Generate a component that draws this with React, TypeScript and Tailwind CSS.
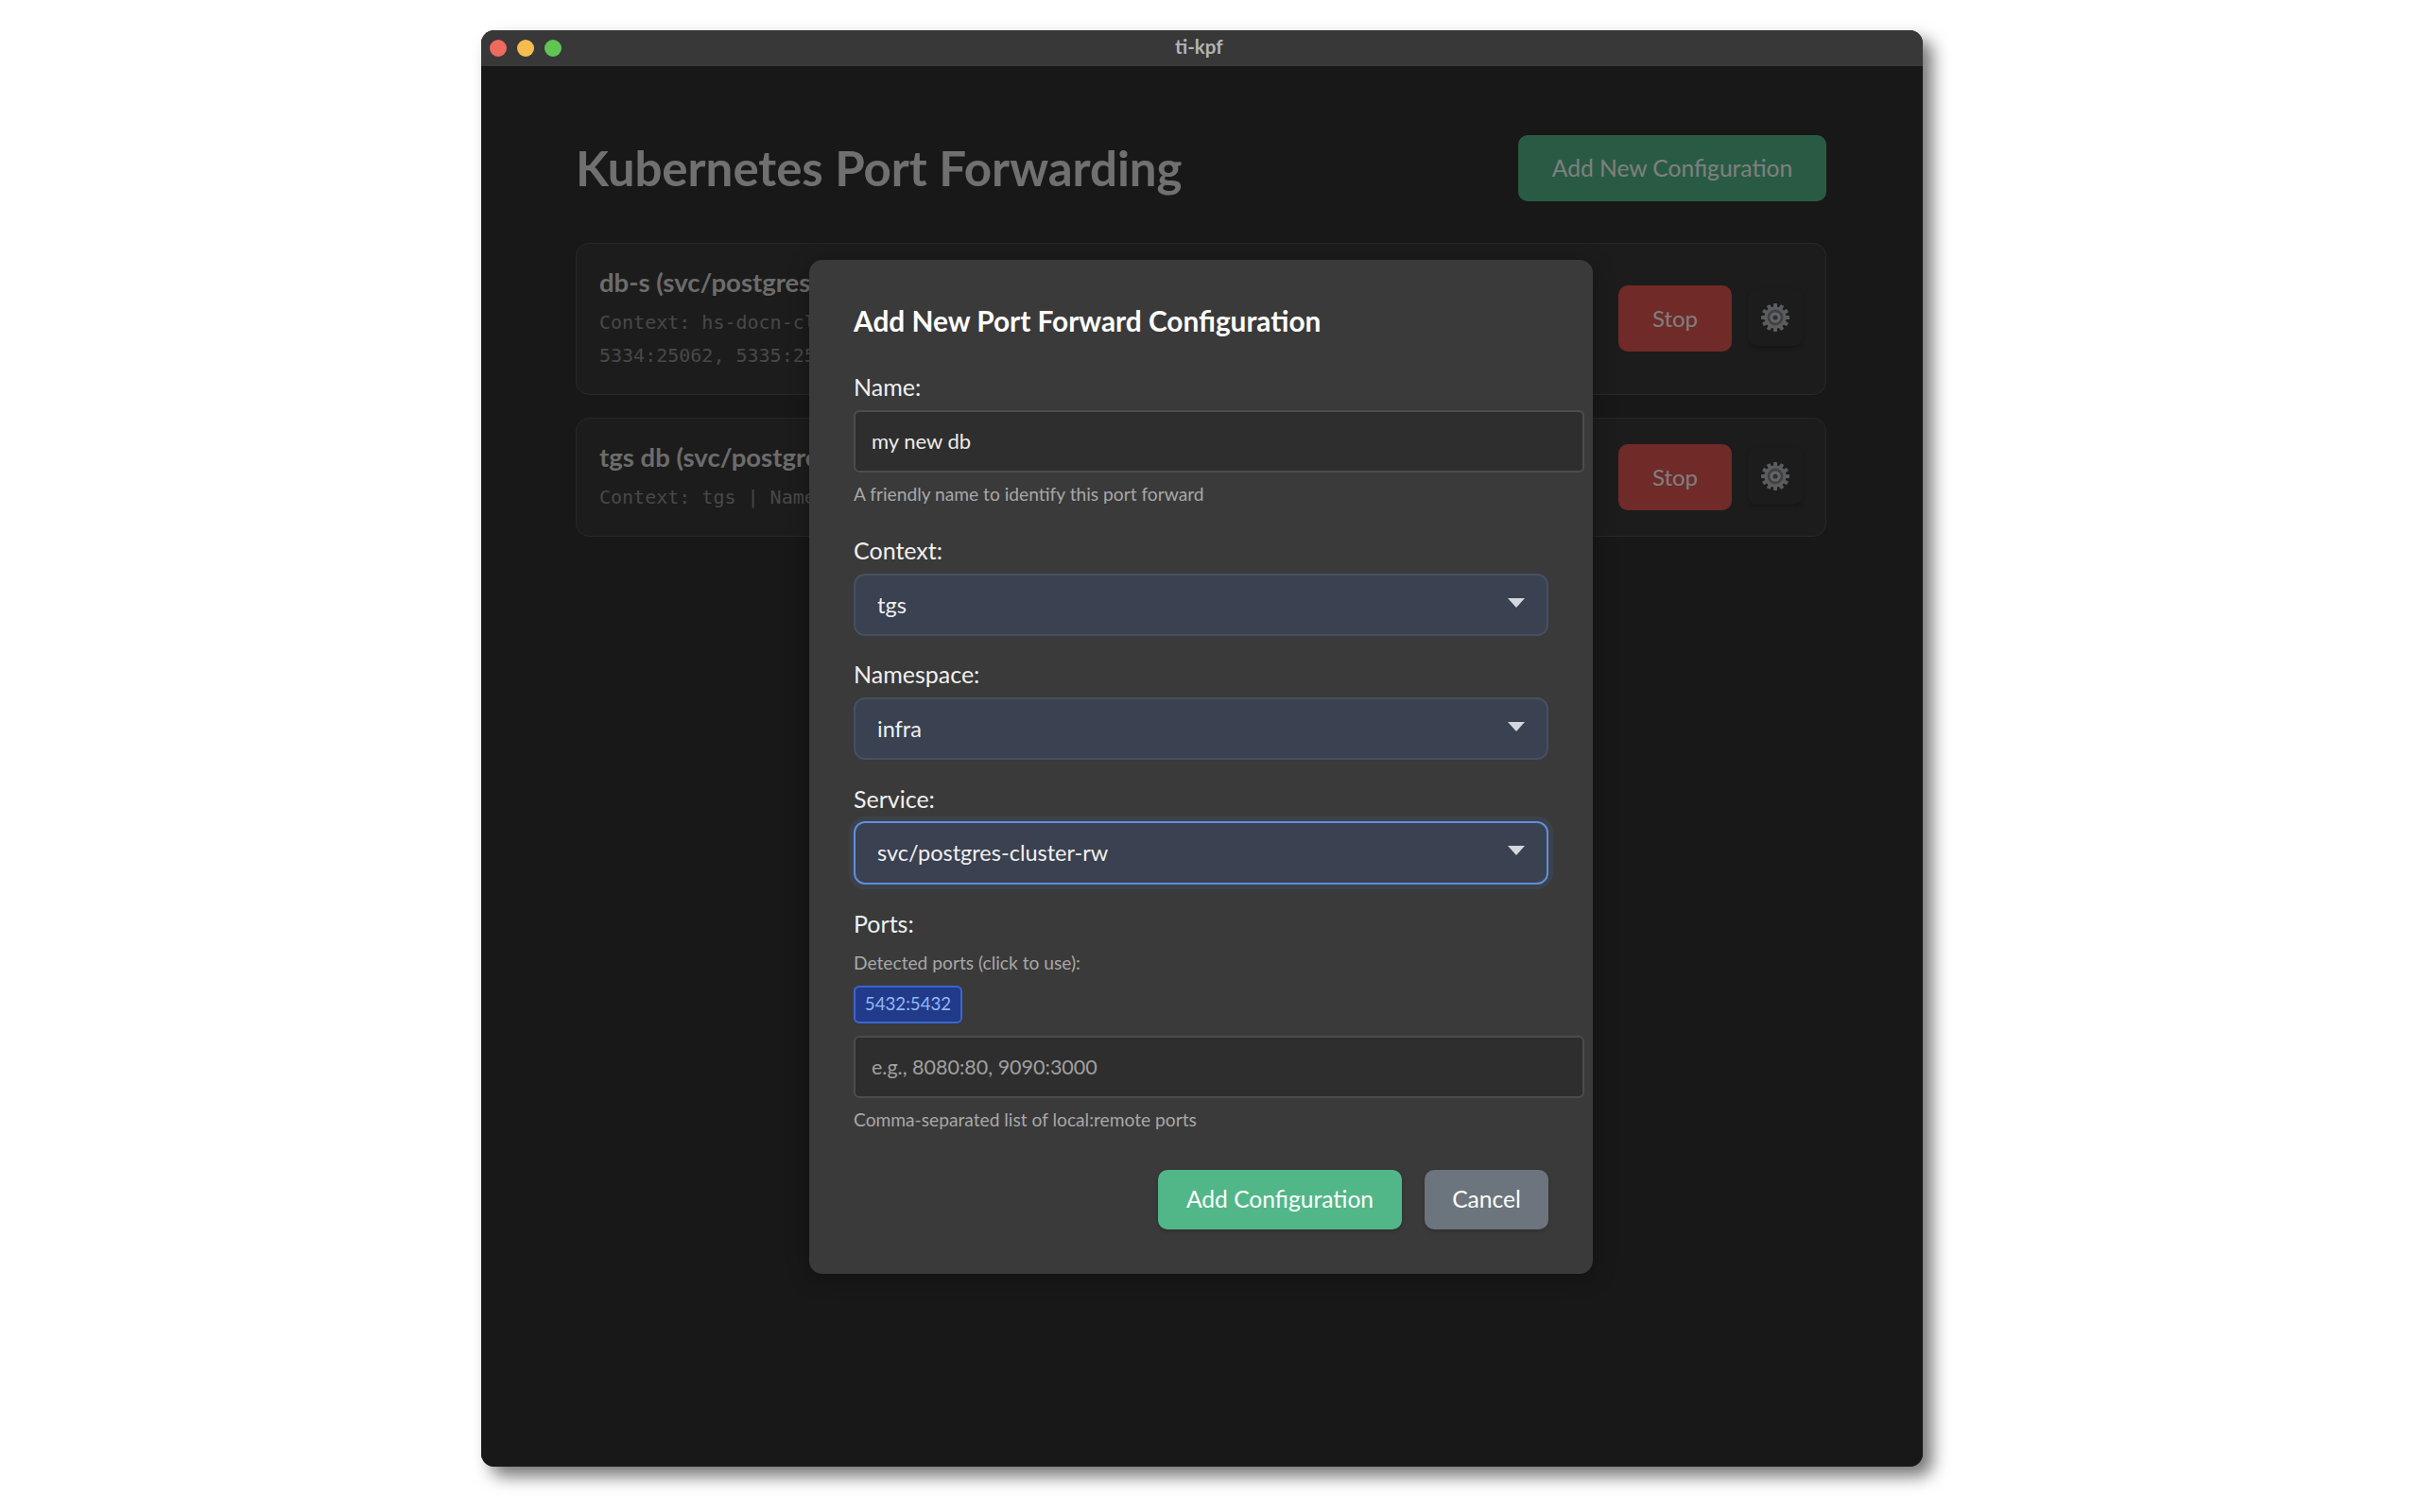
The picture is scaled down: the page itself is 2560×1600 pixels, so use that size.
const sans = "font-['Lato','Noto_Sans',sans-serif]";

function Gear() {
  const teeth = Array.from({ length: 12 }, (_, i) => i * 30);
  return (
    <svg width="32" height="32" viewBox="0 0 32 32" aria-hidden="true">
      {teeth.map((deg) => (
        <rect key={deg} x="14" y="1" width="4" height="6" rx="0.8" fill="#b4b8bd" transform={`rotate(${deg} 16 16)`} />
      ))}
      <circle cx="16" cy="16" r="11.6" fill="#b4b8bd" />
      <circle cx="16" cy="16" r="8.4" fill="#7e8288" />
      <circle cx="16" cy="16" r="5.6" fill="#c6cacf" />
      <circle cx="16" cy="16" r="2.6" fill="#5c5f64" />
    </svg>
  );
}

function ForwardCard({ title, lines }: { title: string; lines: string[] }) {
  return (
    <div className="flex items-center justify-between rounded-[14px] border border-[#505050] bg-[#383838] pb-[23px] pl-[24px] pr-[24px] pt-[25px]">
      <div className="min-w-0">
        <div className="text-[27.5px] font-bold leading-[32px] text-[#d8d8d8]">{title}</div>
        <div className="mt-[9px] font-['DejaVu_Sans_Mono',monospace] text-[20px] leading-[35px] text-[#909090]">
          {lines.map((line) => (
            <div key={line} className="whitespace-nowrap">{line}</div>
          ))}
        </div>
      </div>
      <div className="mb-[3px] flex shrink-0 items-center gap-[17px]">
        <button className="h-[70px] w-[120px] rounded-[10px] bg-[#e05450] text-[24px] text-[#ffffff]">Stop</button>
        <button className="mb-[2px] flex h-[60px] w-[58px] items-center justify-center rounded-[10px] shadow-[0_2px_4px_rgba(0,0,0,0.25)]">
          <Gear />
        </button>
      </div>
    </div>
  );
}

function Label({ children, className = "" }: { children: string; className?: string }) {
  return <label className={`block text-[25px] leading-[30px] text-[#f0f0f0] ${className}`}>{children}</label>;
}

function Help({ children }: { children: string }) {
  return <p className="mt-[11px] text-[19.2px] leading-[24px] text-[#a8a8a8]">{children}</p>;
}

function TextField({ value, placeholder, className = "" }: { value?: string; placeholder?: string; className?: string }) {
  return (
    <input
      readOnly
      value={value}
      placeholder={placeholder}
      className={`block h-[66px] w-[773px] rounded-[6px] border-2 border-[#4c4c4c] bg-[#2e2e2e] px-[17px] text-[22px] text-[#ececec] placeholder:text-[21.5px] placeholder:text-[#a0a0a0] ${className}`}
    />
  );
}

function SelectField({ value, focused = false, className = "" }: { value: string; focused?: boolean; className?: string }) {
  return (
    <div className={`relative w-[735px] ${className}`}>
      <select
        defaultValue={value}
        className={`block w-full appearance-none rounded-[12px] border-2 bg-[#3a4150] px-[23px] pt-[2px] text-[23.5px] text-[#f0f0f0] ${
          focused ? "h-[67px] border-[#5f8fdc] shadow-[0_0_0_5px_rgba(70,90,130,0.22)]" : "h-[66px] border-[#465062]"
        }`}
      >
        <option>{value}</option>
      </select>
      <svg className="absolute right-[25px] top-[26px]" width="18" height="10" viewBox="0 0 18 10" aria-hidden="true">
        <path d="M0 0h18L9 10z" fill="#d4d7dc" />
      </svg>
    </div>
  );
}

export default function App() {
  return (
    <div className={`min-h-screen bg-white pl-[509px] pt-[32px] ${sans}`}>
      <div className="relative flex h-[1520px] w-[1525px] flex-col overflow-visible rounded-[14px] bg-[#181818] shadow-[10px_10px_18px_rgba(0,0,0,0.55)]">
        {/* Title bar */}
        <div className="relative flex h-[38px] shrink-0 items-center gap-[11px] rounded-t-[14px] bg-[#383838] pl-[9px]">
          <span className="h-[18px] w-[18px] rounded-full bg-[#ee6a5f]" />
          <span className="h-[18px] w-[18px] rounded-full bg-[#f5bd4f]" />
          <span className="h-[18px] w-[18px] rounded-full bg-[#61c554]" />
          <span className="absolute left-[734px] -translate-y-[2px] text-[20.5px] font-bold text-[#b4b4b4]">ti-kpf</span>
        </div>

        {/* Page content, dimmed by the overlay */}
        <div className="relative min-h-0 flex-1 rounded-b-[14px] bg-[#303030]">
          <div className="pl-[100px] pr-[102px] pt-[73px]">
            <div className="flex items-center justify-between">
              <h1 className="text-[51px] font-bold leading-[70px] text-[#e0e0e0]">Kubernetes Port Forwarding</h1>
              <button className="h-[70px] w-[326px] rounded-[10px] bg-[#52b788] text-[24.6px] text-[#ffffff]">Add New Configuration</button>
            </div>
            <div className="mt-[44px] flex flex-col gap-[24px]">
              <ForwardCard
                title="db-s (svc/postgres-cluster-rw)"
                lines={["Context: hs-docn-cluster | Namespace: db", "5334:25062, 5335:25063"]}
              />
              <ForwardCard title="tgs db (svc/postgres-cluster-rw)" lines={["Context: tgs | Namespace: infra"]} />
            </div>
          </div>

          {/* Overlay and dialog */}
          <div className="absolute inset-0 flex items-center justify-center rounded-b-[14px] bg-black/50">
            <div className="mr-[2px] h-[1073px] w-[829px] rounded-[14px] bg-[#3a3a3a] px-[47px] pt-[47px] shadow-[0_4px_24px_rgba(0,0,0,0.3)]">
              <h2 className="text-[29.8px] font-bold leading-[36px] text-white">Add New Port Forward Configuration</h2>

              <Label className="mt-[36px]">Name:</Label>
              <TextField value="my new db" className="mt-[10px]" />
              <Help>A friendly name to identify this port forward</Help>

              <Label className="mt-[32px]">Context:</Label>
              <SelectField value="tgs" className="mt-[10px]" />

              <Label className="mt-[25px]">Namespace:</Label>
              <SelectField value="infra" className="mt-[10px]" />

              <Label className="mt-[26px]">Service:</Label>
              <SelectField value="svc/postgres-cluster-rw" focused className="mt-[9px]" />

              <Label className="mt-[26px]">Ports:</Label>
              <p className="mt-[15px] text-[19.2px] leading-[24px] text-[#a8a8a8]">Detected ports (click to use):</p>
              <button className="mt-[12px] block h-[40px] w-[115px] rounded-[6px] border-2 border-[#3a66d0] bg-[#213a8a] text-[18.7px] text-[#93b8f5]">5432:5432</button>
              <TextField placeholder="e.g., 8080:80, 9090:3000" className="mt-[13px]" />
              <Help>Comma-separated list of local:remote ports</Help>

              <div className="mt-[41px] flex w-[735px] justify-end gap-[24px]">
                <button className="h-[63px] w-[258px] rounded-[10px] bg-[#52b788] text-[24.6px] text-white shadow-[0_2px_4px_rgba(0,0,0,0.2)]">Add Configuration</button>
                <button className="h-[63px] w-[131px] rounded-[10px] bg-[#6c757d] text-[24.6px] text-white shadow-[0_2px_4px_rgba(0,0,0,0.2)]">Cancel</button>
              </div>
            </div>
          </div>
        </div>
      </div>
    </div>
  );
}
